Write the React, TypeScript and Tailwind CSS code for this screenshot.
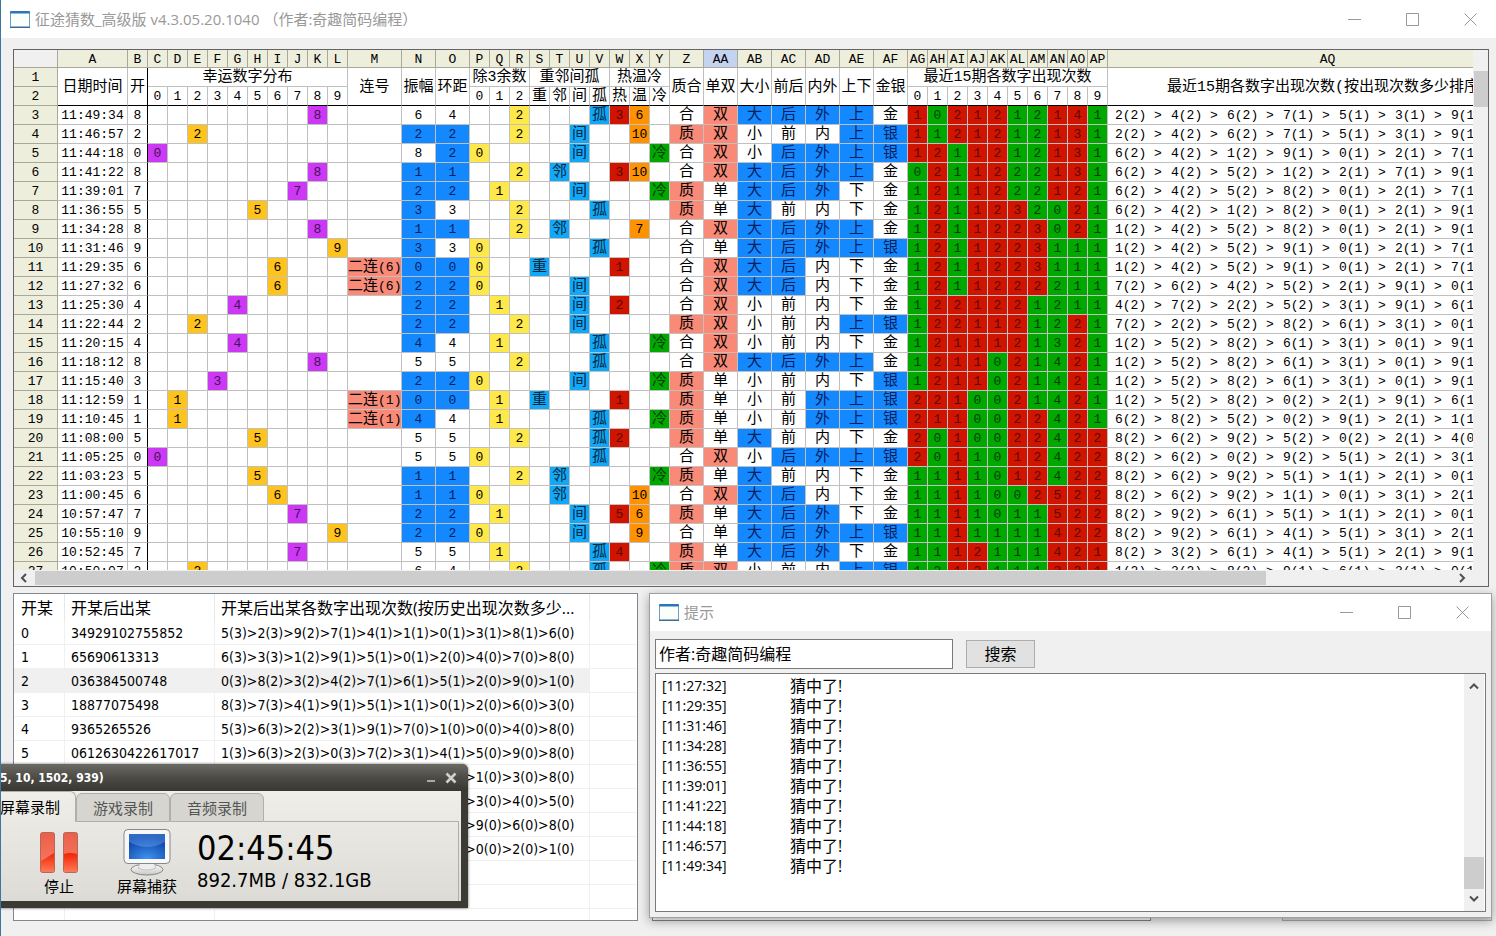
import React from 'react';

type Draw = {
    time: string;
    n: number;
    swing: number;
    gap: number;
    hot?: number;
    warm?: number;
    cold?: boolean;
    streak?: boolean;
    counts: string;
    tones: string;
    rank: string;
};

const draws: Draw[] = [
    { time: '11:49:34', n: 8, swing: 6, gap: 4, hot: 3, warm: 6, counts: '1021212141', tones: 'RGRRRGGRRG', rank: '22 42 62 71 51 31 91' },
    { time: '11:46:57', n: 2, swing: 2, gap: 2, warm: 10, counts: '1121212131', tones: 'RGRRRGGRRG', rank: '22 42 62 71 51 31 91' },
    { time: '11:44:18', n: 0, swing: 8, gap: 2, cold: true, counts: '1211212131', tones: 'RRGRRGGRRG', rank: '62 42 12 91 01 21 71' },
    { time: '11:41:22', n: 8, swing: 1, gap: 1, hot: 3, warm: 10, counts: '0211222131', tones: 'GRGRRGGRRG', rank: '62 42 52 12 21 71 91' },
    { time: '11:39:01', n: 7, swing: 2, gap: 2, cold: true, counts: '1211222121', tones: 'GRGRRGGRRG', rank: '62 42 52 82 01 21 71' },
    { time: '11:36:55', n: 5, swing: 3, gap: 3, counts: '1211232021', tones: 'GRGRRRGGRG', rank: '62 42 12 82 01 21 91' },
    { time: '11:34:28', n: 8, swing: 1, gap: 1, warm: 7, counts: '1211223021', tones: 'GRGRRRRGRG', rank: '12 42 52 82 01 21 91' },
    { time: '11:31:46', n: 9, swing: 3, gap: 3, counts: '1211223111', tones: 'GRGRRRRGGG', rank: '12 42 52 91 01 21 71' },
    { time: '11:29:35', n: 6, swing: 0, gap: 0, hot: 1, streak: true, counts: '1211223111', tones: 'GRGRRRRGGG', rank: '12 42 52 91 01 21 71' },
    { time: '11:27:32', n: 6, swing: 2, gap: 2, streak: true, counts: '1211222211', tones: 'GRGRRRRGGG', rank: '72 62 42 52 21 91 01' },
    { time: '11:25:30', n: 4, swing: 2, gap: 2, hot: 2, counts: '1221221211', tones: 'GRRRRRGGGG', rank: '42 72 22 52 31 91 61' },
    { time: '11:22:44', n: 2, swing: 2, gap: 2, counts: '1221121221', tones: 'GRRRRRGGRG', rank: '72 22 52 82 61 31 01' },
    { time: '11:20:15', n: 4, swing: 4, gap: 4, cold: true, counts: '1211121321', tones: 'GRRRRRGGRG', rank: '12 52 82 61 31 01 91' },
    { time: '11:18:12', n: 8, swing: 5, gap: 5, counts: '1211021421', tones: 'GRRRGRGGRG', rank: '12 52 82 61 31 01 91' },
    { time: '11:15:40', n: 3, swing: 2, gap: 2, cold: true, counts: '1211021421', tones: 'GRRRGRGGRG', rank: '12 52 82 61 31 01 91' },
    { time: '11:12:59', n: 1, swing: 0, gap: 0, hot: 1, streak: true, counts: '2210021421', tones: 'RRRGGRGGRG', rank: '12 52 82 02 21 91 61' },
    { time: '11:10:45', n: 1, swing: 4, gap: 4, cold: true, streak: true, counts: '2110022421', tones: 'RRRGGRRGRG', rank: '62 82 52 02 91 21 11' },
    { time: '11:08:00', n: 5, swing: 5, gap: 5, hot: 2, counts: '2010022422', tones: 'RGRGGRRGRR', rank: '82 62 92 52 02 21 40' },
    { time: '11:05:25', n: 0, swing: 5, gap: 5, counts: '2011012422', tones: 'RGRGGRRGRR', rank: '82 62 02 92 51 21 31' },
    { time: '11:03:23', n: 5, swing: 1, gap: 1, cold: true, counts: '1111012422', tones: 'GGRGGRRGRR', rank: '82 62 92 51 11 21 01' },
    { time: '11:00:45', n: 6, swing: 1, gap: 1, warm: 10, counts: '1111002522', tones: 'GGRGGGRRRR', rank: '82 62 92 11 01 31 21' },
    { time: '10:57:47', n: 7, swing: 2, gap: 2, hot: 5, warm: 6, counts: '1111011522', tones: 'GGRGGGGRRR', rank: '82 92 61 51 11 21 01' },
    { time: '10:55:10', n: 9, swing: 2, gap: 2, warm: 9, counts: '1111111422', tones: 'GGRGGGGRRR', rank: '82 92 61 41 51 31 21' },
    { time: '10:52:45', n: 7, swing: 5, gap: 5, hot: 4, counts: '1112111421', tones: 'GGRRGGGRRR', rank: '82 32 61 41 51 21 91' },
    { time: '10:50:07', n: 2, swing: 6, gap: 4, cold: true, counts: '1212111321', tones: 'GGRRGGGRRR', rank: '12 32 82 91 61 31 01' },
];

const history = [
    ['0', '34929102755852', '5(3)>2(3)>9(2)>7(1)>4(1)>1(1)>0(1)>3(1)>8(1)>6(0)'],
    ['1', '65690613313', '6(3)>3(3)>1(2)>9(1)>5(1)>0(1)>2(0)>4(0)>7(0)>8(0)'],
    ['2', '036384500748', '0(3)>8(2)>3(2)>4(2)>7(1)>6(1)>5(1)>2(0)>9(0)>1(0)'],
    ['3', '18877075498', '8(3)>7(3)>4(1)>9(1)>5(1)>1(1)>0(1)>2(0)>6(0)>3(0)'],
    ['4', '9365265526', '5(3)>6(3)>2(2)>3(1)>9(1)>7(0)>1(0)>0(0)>4(0)>8(0)'],
    ['5', '0612630422617017', '1(3)>6(3)>2(3)>0(3)>7(2)>3(1)>4(1)>5(0)>9(0)>8(0)'],
    ['6', '64274592', '4(2)>2(2)>6(1)>7(1)>5(1)>9(1)>0(0)>1(0)>3(0)>8(0)'],
    ['7', '8712916', '1(2)>8(1)>7(1)>2(1)>9(1)>6(1)>0(0)>3(0)>4(0)>5(0)'],
    ['8', '7532104', '7(1)>5(1)>3(1)>2(1)>1(1)>0(1)>4(1)>9(0)>6(0)>8(0)'],
    ['9', '8675439', '8(1)>6(1)>7(1)>5(1)>4(1)>3(1)>9(1)>0(0)>2(0)>1(0)'],
    ['', '', ''],
    ['', '', ''],
    ['', '', ''],
];

const log = ['11:27:32', '11:29:35', '11:31:46', '11:34:28', '11:36:55', '11:39:01', '11:41:22', '11:44:18', '11:46:57', '11:49:34'];

const digits = [0, 1, 2, 3, 4, 5, 6, 7, 8, 9];
const letters = 'A B C D E F G H I J K L M N O P Q R S T U V W X Y Z AA AB AC AD AE AF AG AH AI AJ AK AL AM AN AO AP AQ'.split(' ');
const relations = ['重', '邻', '间', '孤'];

const PURPLE = 'bg-[#cc38f4] text-[#43125a]';
const AMBER = 'bg-[#ffc31e]';
const YELLOW = 'bg-[#ffe94a]';
const BLUE = 'bg-[#1489ff] text-[#06205c]';
const SKY = 'bg-[#12a8f8] text-[#04283f]';
const RED = 'bg-[#d01400] text-[#5a0a04]';
const ORANGE = 'bg-[#ff9200]';
const GREEN = 'bg-[#00a800] text-[#043c06]';
const SALMON = 'bg-[#f98a78]';

// [yes label, no label, numbers that count as yes, colour]
const traits: [string, string, number[], string][] = [
    ['质', '合', [1, 2, 3, 5, 7], SALMON],
    ['双', '单', [0, 2, 4, 6, 8], SALMON],
    ['大', '小', [5, 6, 7, 8, 9], BLUE],
    ['后', '前', [0, 6, 7, 8, 9], BLUE],
    ['外', '内', [0, 1, 7, 8, 9], BLUE],
    ['上', '下', [0, 1, 2, 8, 9], BLUE],
    ['银', '金', [0, 1, 2, 3, 9], BLUE],
];

const Cell: React.FC<{ tone?: string; cjk?: boolean; children?: React.ReactNode }> = ({ tone = '', cjk, children }) => (
    <td className={`overflow-hidden border-r border-b border-[#c0c0c0] pt-[2px] text-center ${cjk ? 'text-[15px]' : 'text-[13px]'} ${tone}`}>
        {children}
    </td>
);

const HeadCell: React.FC<{ span?: number; tall?: boolean; className?: string; children?: React.ReactNode }> = ({
    span = 1,
    tall,
    className = 'border-[#c0c0c0]',
    children,
}) => (
    <th
        colSpan={span}
        rowSpan={tall ? 2 : 1}
        className={`border-r border-b pt-[2px] text-[15px] font-normal ${tall ? 'border-b-black' : ''} ${className}`}
    >
        {children}
    </th>
);

const RowHead: React.FC<{ n: number }> = ({ n }) => (
    <th className="border-r border-b border-[#aca899] bg-[#eeeedd] pt-[2px] text-[13px] font-normal">{n}</th>
);

const DrawRow: React.FC<{ d: Draw; index: number }> = ({ d, index }) => (
    <tr className="h-[19px]">
        <RowHead n={index + 3} />
        <Cell>{d.time}</Cell>
        <Cell tone="border-r-black">{d.n}</Cell>
        {digits.map((i) => (
            <Cell key={i} tone={i !== d.n ? '' : [0, 3, 4, 7, 8].includes(i) ? PURPLE : AMBER}>
                {i === d.n && i}
            </Cell>
        ))}
        <Cell cjk tone={d.streak ? SALMON : ''}>
            {d.streak && (
                <>
                    二连<span className="text-[13px] leading-none">({d.n})</span>
                </>
            )}
        </Cell>
        <Cell tone={d.swing <= 4 ? BLUE : ''}>{d.swing}</Cell>
        <Cell tone={d.gap <= 2 ? BLUE : ''}>{d.gap}</Cell>
        {[0, 1, 2].map((i) => (
            <Cell key={i} tone={d.n % 3 === i ? YELLOW : ''}>
                {d.n % 3 === i && i}
            </Cell>
        ))}
        {relations.map((label, i) => {
            const on = Math.min(d.gap, 3) === i;
            return (
                <Cell key={label} cjk tone={on ? SKY : ''}>
                    {on && label}
                </Cell>
            );
        })}
        <Cell tone={d.hot ? RED : ''}>{d.hot}</Cell>
        <Cell tone={d.warm ? ORANGE : ''}>{d.warm}</Cell>
        <Cell cjk tone={d.cold ? GREEN : ''}>
            {d.cold && '冷'}
        </Cell>
        {traits.map(([yes, no, set, tone]) => (
            <Cell key={yes} cjk tone={set.includes(d.n) ? tone : ''}>
                {set.includes(d.n) ? yes : no}
            </Cell>
        ))}
        {digits.map((i) => (
            <Cell key={i} tone={d.tones[i] === 'R' ? RED : GREEN}>
                {d.counts[i]}
            </Cell>
        ))}
        <td className="border-b border-[#c0c0c0] pt-[2px] pl-[7px] text-[13px]">
            <div className="flex">
                {d.rank.split(' ').map((p) => (
                    <span key={p} className="w-14 shrink-0 whitespace-pre">
                        {`${p[0]}(${p[1]}) >`}
                    </span>
                ))}
            </div>
        </td>
    </tr>
);

const DrawTable: React.FC = () => (
    <table className="w-[1534px] table-fixed border-separate border-spacing-0 bg-white font-['Liberation_Mono','Noto_Sans_CJK_SC',monospace] leading-[16px] whitespace-nowrap text-black">
        <colgroup>
            <col className="w-[44px]" />
            <col className="w-[70px]" />
            <col className="w-[20px]" />
            <col span={10} className="w-[20px]" />
            <col className="w-[54px]" />
            <col span={2} className="w-[34px]" />
            <col span={10} className="w-[20px]" />
            <col span={7} className="w-[34px]" />
            <col span={10} className="w-[20px]" />
            <col className="w-[440px]" />
        </colgroup>
        <thead>
            <tr className="h-[18px] leading-[15px]">
                <th className="border-r border-b border-[#aca899] bg-[#f0f0f0]" />
                {letters.map((l) => (
                    <th
                        key={l}
                        className={`border-r border-b border-[#aca899] pt-[2px] text-[13px] font-normal ${l === 'AA' ? 'bg-[#c4d3f0]' : 'bg-[#eeeedd]'}`}
                    >
                        {l}
                    </th>
                ))}
            </tr>
            <tr className="h-[19px]">
                <RowHead n={1} />
                <HeadCell tall>日期时间</HeadCell>
                <HeadCell tall className="border-r-black">开</HeadCell>
                <HeadCell span={10}>幸运数字分布</HeadCell>
                <HeadCell tall>连号</HeadCell>
                <HeadCell tall>振幅</HeadCell>
                <HeadCell tall>环距</HeadCell>
                <HeadCell span={3}>除3余数</HeadCell>
                <HeadCell span={4}>重邻间孤</HeadCell>
                <HeadCell span={3}>热温冷</HeadCell>
                {['质合', '单双', '大小', '前后', '内外', '上下', '金银'].map((t) => (
                    <HeadCell key={t} tall>
                        {t}
                    </HeadCell>
                ))}
                <HeadCell span={10}>最近15期各数字出现次数</HeadCell>
                <HeadCell tall>最近15期各数字出现次数(按出现次数多少排序)</HeadCell>
            </tr>
            <tr className="h-[19px]">
                <RowHead n={2} />
                {[...digits, 0, 1, 2, '重', '邻', '间', '孤', '热', '温', '冷', ...digits].map((t, i) => (
                    <th
                        key={i}
                        className={`border-r border-b border-r-[#c0c0c0] border-b-black pt-[2px] font-normal ${typeof t === 'number' ? 'text-[13px]' : 'text-[15px]'}`}
                    >
                        {t}
                    </th>
                ))}
            </tr>
        </thead>
        <tbody>
            {draws.map((d, i) => (
                <DrawRow key={d.time} d={d} index={i} />
            ))}
        </tbody>
    </table>
);

const Chevron: React.FC<{ d: string }> = ({ d }) => (
    <svg viewBox="0 0 10 10" className="size-[10px] shrink-0" fill="none" stroke="#505050" strokeWidth="2">
        <path d={d} />
    </svg>
);

const AppIcon: React.FC = () => (
    <svg viewBox="0 0 20 17" className="h-[17px] w-5 shrink-0">
        <rect x="0.5" y="0.5" width="19" height="16" rx="1" fill="#fbfffa" stroke="#6aa0c8" />
        <rect x="0" y="0" width="20" height="2.5" rx="1" fill="#2b76b9" />
        <rect x="0" y="15.5" width="20" height="1.5" fill="#3b6c94" />
    </svg>
);

const WindowButtons: React.FC = () => (
    <div className="ml-auto flex">
        <button aria-label="最小化" className="flex h-9 w-[58px] items-center justify-center">
            <svg viewBox="0 0 13 13" className="size-[13px]" stroke="#999" fill="none"><path d="M0 6.5h13" /></svg>
        </button>
        <button aria-label="最大化" className="flex h-9 w-[58px] items-center justify-center">
            <svg viewBox="0 0 13 13" className="size-[13px]" stroke="#999" fill="none"><path d="M.5.5h12v12H.5z" /></svg>
        </button>
        <button aria-label="关闭" className="flex h-9 w-[58px] items-center justify-center">
            <svg viewBox="0 0 13 13" className="size-[13px]" stroke="#999" fill="none"><path d="M.5.5l12 12M12.5.5l-12 12" /></svg>
        </button>
    </div>
);

const HistoryList: React.FC = () => (
    <div className="w-[625px] shrink-0 overflow-hidden border border-[#828790] bg-white text-black">
        <table className="w-full table-fixed border-separate border-spacing-0 text-left [&_td]:p-0 [&_td]:pl-[6px] [&_td:first-child]:pl-[7px] [&_th]:p-0 [&_th]:pl-[6px] [&_th:first-child]:pl-[7px]">
            <colgroup>
                <col className="w-[51px]" />
                <col className="w-[150px]" />
                <col className="w-[375px]" />
                <col />
            </colgroup>
            <thead>
                <tr className="h-[27px] text-base leading-6 [&>th]:border-r [&>th]:border-[#e8e8e8] [&>th]:font-normal [&>th:last-child]:border-r-0">
                    <th>开某</th>
                    <th>开某后出某</th>
                    <th className="whitespace-nowrap">开某后出某各数字出现次数(按历史出现次数多少...</th>
                    <th />
                </tr>
            </thead>
            <tbody className="font-['DejaVu_Sans_Condensed',sans-serif] text-sm">
                {history.map((row, i) => (
                    <tr key={i} className={`h-6 [&>td]:border-r [&>td]:border-b [&>td]:border-[#f0f0f0] [&>td:last-child]:border-r-0 [&>td:last-child]:bg-white ${i === 2 ? 'bg-[#f0f0f0]' : ''}`}>
                        <td>{row[0]}</td>
                        <td>{row[1]}</td>
                        <td className="whitespace-nowrap">{row[2]}</td>
                        <td />
                    </tr>
                ))}
            </tbody>
        </table>
    </div>
);

const TipDialog: React.FC = () => (
    <section className="absolute right-1 bottom-[18px] left-[648px] flex h-[325px] flex-col border border-[#a0a0a0] bg-[#f0f0f0] shadow-[0_3px_10px_rgba(0,0,0,0.35)]">
        <header className="flex h-[37px] shrink-0 items-center bg-white pl-[9px]">
            <AppIcon />
            <h2 className="ml-[5px] text-[15px] text-[#999]">提示</h2>
            <WindowButtons />
        </header>
        <form className="flex items-center pt-2 pl-[5px]" onSubmit={(e) => e.preventDefault()}>
            <input
                aria-label="作者"
                defaultValue="作者:奇趣简码编程"
                className="h-[30px] w-[298px] border border-[#7a7a7a] bg-white px-[3px] pb-[3px] text-base leading-6 text-black outline-none"
            />
            <button className="ml-[13px] h-[28px] w-[69px] border border-[#adadad] bg-[#e1e1e1] text-base leading-6 text-black">搜索</button>
        </form>
        <div className="mx-[5px] mt-1 mb-[5px] flex min-h-0 flex-1 border border-[#7a7a7a] bg-white">
            <ul className="flex-1 px-[6px] py-[2px] text-black">
                {log.map((t) => (
                    <li key={t} className="flex h-5 items-center">
                        <span className="w-32 text-sm leading-5">[{t}]</span>
                        <span className="text-base leading-5">猜中了!</span>
                    </li>
                ))}
            </ul>
            <div className="mr-px flex w-5 flex-col items-center bg-[#f0f0f0] py-[7px]">
                <Chevron d="M1 7.5l4-4 4 4" />
                <div className="mt-auto mb-[5px] h-8 w-full bg-[#cdcdcd]" />
                <Chevron d="M1 2.5l4 4 4-4" />
            </div>
        </div>
    </section>
);

const Recorder: React.FC = () => (
    <section className="absolute bottom-[28px] -left-px flex h-[144px] w-[468px] flex-col rounded-tr-md bg-[#3b3a34] pr-[7px] pb-[7px] shadow-[0_0_3px_rgba(0,0,0,0.6)]">
        <header className="-mr-[7px] flex h-[27px] shrink-0 items-center rounded-tr-md bg-linear-to-b from-[#6b6a64] via-[#4c4b45] to-[#383731] pr-[7px] font-['DejaVu_Sans_Condensed',sans-serif]">
            <h2 className="text-xs font-bold text-white">5, 10, 1502, 939)</h2>
            <button aria-label="最小化" className="ml-auto p-1">
                <svg viewBox="0 0 12 12" className="size-3" stroke="#aaa" strokeWidth="2"><path d="M2 9h8" /></svg>
            </button>
            <button aria-label="关闭" className="flex p-1">
                <svg viewBox="0 0 12 12" className="size-3" stroke="#d0d0cc" strokeWidth="2.6"><path d="M1.5 1.5l9 9M10.5 1.5l-9 9" /></svg>
            </button>
        </header>
        <div className="flex min-h-0 flex-1 flex-col bg-linear-to-b from-[#f0eee8] to-[#dcdbd6] pr-[2px]">
            <nav className="flex h-[31px] shrink-0 items-end text-[15px] leading-5 whitespace-nowrap">
                <button className="h-[31px] w-[76px] shrink-0 rounded-tr-md border-t border-r border-[#b0afa9] text-left text-black">屏幕录制</button>
                <button className="h-[29px] w-[94px] rounded-t-md border border-[#b0afa9] bg-[#d6d5d0] text-[#555]">游戏录制</button>
                <button className="h-[29px] w-[94px] rounded-t-md border border-[#b0afa9] bg-[#d6d5d0] text-[#555]">音频录制</button>
                <div className="flex-1 self-stretch border-b border-[#b0afa9]" />
            </nav>
            <div className="flex flex-1 border-r border-[#b0afa9] pt-[6px] pl-[19px] text-[15px] leading-5 text-black">
                <button className="flex w-20 flex-col items-center">
                    <svg viewBox="0 0 40 48" className="h-12 w-10">
                        <defs>
                            <linearGradient id="bar" x1="0" y1="0" x2="0" y2="1">
                                <stop offset="0" stopColor="#e8604a" />
                                <stop offset="1" stopColor="#ff7c62" />
                            </linearGradient>
                            <linearGradient id="glow" x1="0" y1="0" x2="0" y2="1">
                                <stop offset="0" stopColor="#f02404" />
                                <stop offset="1" stopColor="#ff7a58" />
                            </linearGradient>
                        </defs>
                        <rect x="1.5" y="4.5" width="14" height="40" rx="2" fill="url(#bar)" stroke="#b5685a" />
                        <path d="M2 33q7-4 13-8v17q0 2-2 2H4q-2 0-2-2z" fill="url(#glow)" />
                        <rect x="24.5" y="4.5" width="14" height="40" rx="2" fill="url(#bar)" stroke="#b5685a" />
                        <path d="M25 26q6-2 13 0v16q0 2-2 2h-9q-2 0-2-2z" fill="url(#glow)" />
                    </svg>
                    停止
                </button>
                <button className="flex w-24 flex-col items-center">
                    <svg viewBox="0 0 48 48" className="size-12">
                        <defs>
                            <radialGradient id="screen" cx="0.5" cy="1" r="0.9">
                                <stop offset="0" stopColor="#3f94f0" />
                                <stop offset="1" stopColor="#0a3ca4" />
                            </radialGradient>
                            <linearGradient id="stand" x1="0" y1="0" x2="0" y2="1">
                                <stop offset="0" stopColor="#fff" />
                                <stop offset="1" stopColor="#c8c8c8" />
                            </linearGradient>
                        </defs>
                        <ellipse cx="24" cy="41.5" rx="16" ry="5.5" fill="url(#stand)" stroke="#888" />
                        <path d="M17 35h14l2 5q-9 4-18 0z" fill="#eee" stroke="#aaa" strokeWidth="0.6" />
                        <rect x="1" y="1.5" width="46" height="34" rx="4" fill="#f8f8f8" stroke="#888" />
                        <rect x="6" y="6" width="36" height="25" fill="url(#screen)" />
                        <path d="M6 6h36v8q-18 10-36 0z" fill="#6cb0f5" opacity="0.4" />
                    </svg>
                    屏幕捕获
                </button>
                <div className="ml-[2px] font-['DejaVu_Sans_Condensed',sans-serif]">
                    <p className="text-[34px] leading-10">02:45:45</p>
                    <p className="text-xl leading-6">892.7MB / 832.1GB</p>
                </div>
            </div>
        </div>
    </section>
);

const App: React.FC = () => {
    return (
        <div className="relative flex h-screen flex-col overflow-hidden border-l border-[#3a78a0] bg-[#f0f0f0] font-['Open_Sans','Noto_Sans_CJK_SC',sans-serif]">
            <header className="-mr-[3px] flex h-[38px] shrink-0 items-center bg-white pl-[9px]">
                <AppIcon />
                <h1 className="ml-[5px] text-[15px] text-[#999]">征途猜数_高级版 v4.3.05.20.1040 （作者:奇趣简码编程）</h1>
                <WindowButtons />
            </header>

            <main className="flex min-h-0 flex-1 flex-col gap-[6px] pt-[11px] pb-[15px] pl-3">
                <section className="mr-[7px] flex min-h-0 flex-1 flex-col border border-[#646464] bg-[#f0f0f0]">
                    <div className="flex min-h-0 flex-1">
                        <div className="min-w-0 flex-1 overflow-hidden">
                            <DrawTable />
                        </div>
                        <div className="ml-px w-[14px] pt-[21px]">
                            <div className="h-9 bg-[#cdcdcd]" />
                        </div>
                    </div>
                    <div className="flex h-4 items-center pr-[21px] pl-[5px]">
                        <Chevron d="M7 1L3 5l4 4" />
                        <div className="ml-[6px] h-[14px] w-[85%] bg-[#cdcdcd]" />
                        <div className="ml-auto flex">
                            <Chevron d="M3 1l4 4-4 4" />
                        </div>
                    </div>
                </section>

                <div className="mr-1 flex h-[328px] shrink-0">
                    <HistoryList />
                    <div className="ml-[14px] w-[499px] border border-[#828790] bg-white" />
                    <div className="ml-[131px] flex-1 border border-[#adadad] bg-[#e1e1e1]" />
                </div>
            </main>

            <TipDialog />
            <Recorder />
        </div>
    );
};

export default App;
